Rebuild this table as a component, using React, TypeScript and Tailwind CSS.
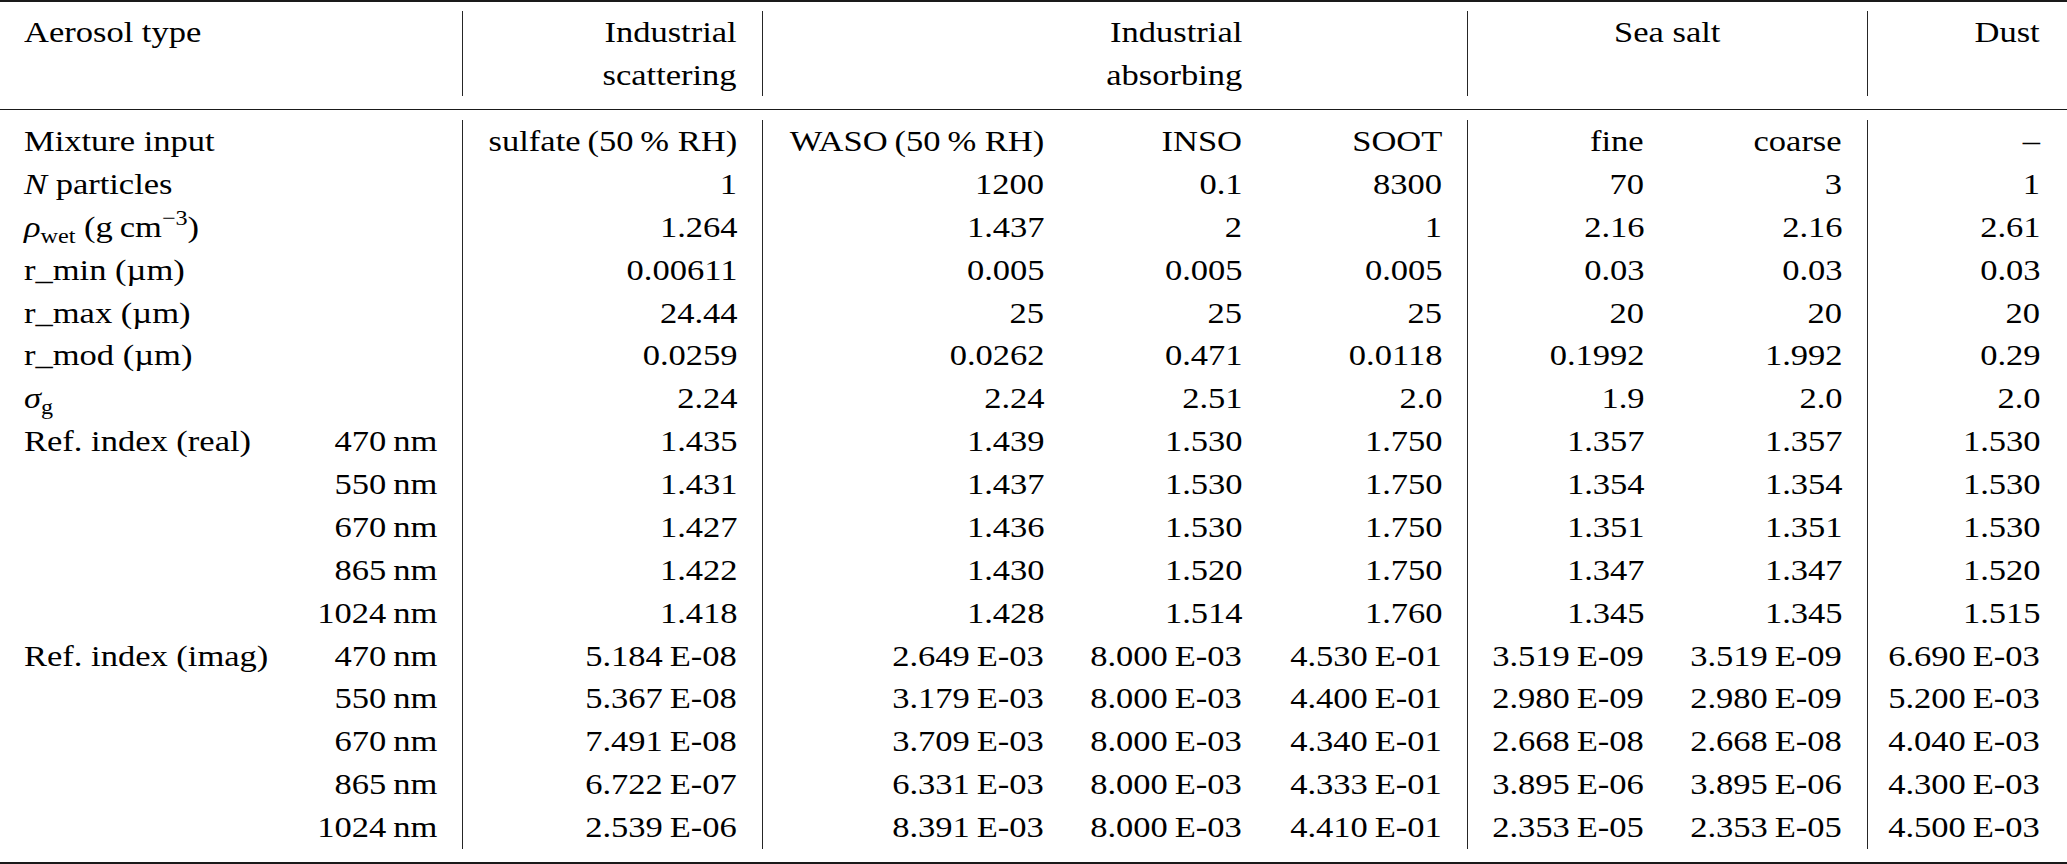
import React from 'react';

// column widths taken from the table rules: vertical lines fall at 462, 762, 1467 and 1867
const gridCols = 'grid grid-cols-[290px_172px_300px_307px_198px_200px_202px_198px_198px]';
const ruledCols = [2, 3, 6, 8];
const thin = '\u2009';

const sci = (v: string) => v.replace(' ', thin);
const nm = (v: string) => `${v}${thin}nm`;

// the typeset table is a little wider than plain Times, so stretch glyphs sideways
const Txt = ({ children, from = 'right' }: { children: React.ReactNode; from?: 'left' | 'right' | 'center' }) => (
  <span
    className={`inline-block scale-x-[1.15] ${
      from === 'left' ? 'origin-left' : from === 'center' ? 'origin-center' : 'origin-right'
    }`}
  >
    {children}
  </span>
);

const Sub = ({ children }: { children: React.ReactNode }) => (
  <span className="relative top-[6px] text-[21px] leading-none">{children}</span>
);

const Sup = ({ children }: { children: React.ReactNode }) => (
  <span className="relative -top-[12px] text-[21px] leading-none">{children}</span>
);

interface Row {
  label?: React.ReactNode;
  wl?: string;
  vals: string[];
}

const rows: Row[] = [
  { label: 'Mixture input', vals: [`sulfate (50${thin}% RH)`, `WASO (50${thin}% RH)`, 'INSO', 'SOOT', 'fine', 'coarse', '–'] },
  { label: <><span className="italic">N</span> particles</>, vals: ['1', '1200', '0.1', '8300', '70', '3', '1'] },
  {
    label: <><span className="italic">ρ</span><Sub>wet</Sub> (g{thin}cm<Sup>−3</Sup>)</>,
    vals: ['1.264', '1.437', '2', '1', '2.16', '2.16', '2.61'],
  },
  { label: 'r_min (µm)', vals: ['0.00611', '0.005', '0.005', '0.005', '0.03', '0.03', '0.03'] },
  { label: 'r_max (µm)', vals: ['24.44', '25', '25', '25', '20', '20', '20'] },
  { label: 'r_mod (µm)', vals: ['0.0259', '0.0262', '0.471', '0.0118', '0.1992', '1.992', '0.29'] },
  { label: <><span className="italic">σ</span><Sub>g</Sub></>, vals: ['2.24', '2.24', '2.51', '2.0', '1.9', '2.0', '2.0'] },
  { label: 'Ref. index (real)', wl: '470', vals: ['1.435', '1.439', '1.530', '1.750', '1.357', '1.357', '1.530'] },
  { wl: '550', vals: ['1.431', '1.437', '1.530', '1.750', '1.354', '1.354', '1.530'] },
  { wl: '670', vals: ['1.427', '1.436', '1.530', '1.750', '1.351', '1.351', '1.530'] },
  { wl: '865', vals: ['1.422', '1.430', '1.520', '1.750', '1.347', '1.347', '1.520'] },
  { wl: '1024', vals: ['1.418', '1.428', '1.514', '1.760', '1.345', '1.345', '1.515'] },
  {
    label: 'Ref. index (imag)',
    wl: '470',
    vals: ['5.184 E-08', '2.649 E-03', '8.000 E-03', '4.530 E-01', '3.519 E-09', '3.519 E-09', '6.690 E-03'],
  },
  { wl: '550', vals: ['5.367 E-08', '3.179 E-03', '8.000 E-03', '4.400 E-01', '2.980 E-09', '2.980 E-09', '5.200 E-03'] },
  { wl: '670', vals: ['7.491 E-08', '3.709 E-03', '8.000 E-03', '4.340 E-01', '2.668 E-08', '2.668 E-08', '4.040 E-03'] },
  { wl: '865', vals: ['6.722 E-07', '6.331 E-03', '8.000 E-03', '4.333 E-01', '3.895 E-06', '3.895 E-06', '4.300 E-03'] },
  { wl: '1024', vals: ['2.539 E-06', '8.391 E-03', '8.000 E-03', '4.410 E-01', '2.353 E-05', '2.353 E-05', '4.500 E-03'] },
];

const cellCls = (i: number) =>
  `${i === 0 ? 'pl-[24px] text-left' : 'pr-[25px] text-right'} whitespace-nowrap ${
    ruledCols.includes(i) ? 'border-l border-[#262626]' : ''
  }`;

export default function App() {
  return (
    <div className="w-[2067px] h-[864px] bg-white text-black [font-family:'Liberation_Serif','Times_New_Roman',serif] text-[30px] border-t-2 border-[#1a1a1a]">
      {/* header */}
      <div className={`${gridCols} mt-[9px] leading-[42.5px]`}>
        <div className={cellCls(0)}>
          <Txt from="left">Aerosol type</Txt>
        </div>
        <div className={cellCls(1)} />
        <div className={cellCls(2)}>
          <Txt>
            Industrial
            <br />
            scattering
          </Txt>
        </div>
        <div className={cellCls(3)} />
        <div className={cellCls(4)}>
          <Txt>
            Industrial
            <br />
            absorbing
          </Txt>
        </div>
        <div className={cellCls(5)} />
        <div className="col-span-2 border-l border-[#262626] px-[25px] text-center whitespace-nowrap">
          <Txt from="center">Sea salt</Txt>
        </div>
        <div className={cellCls(8)}>
          <Txt>Dust</Txt>
        </div>
      </div>

      <div className="mt-[13px] border-t border-[#1a1a1a]" />

      {/* body */}
      <div className="mt-[10px] leading-[42.875px]">
        {rows.map((r, ri) => {
          const cells: React.ReactNode[] = [r.label ?? '', r.wl ? nm(r.wl) : '', ...r.vals.map(sci)];
          return (
            <div key={ri} className={gridCols}>
              {cells.map((c, i) => (
                <div key={i} className={cellCls(i)}>
                  {c !== '' && <Txt from={i === 0 ? 'left' : 'right'}>{c}</Txt>}
                </div>
              ))}
            </div>
          );
        })}
      </div>

      <div className="mt-[13px] border-t-2 border-[#1a1a1a]" />
    </div>
  );
}
